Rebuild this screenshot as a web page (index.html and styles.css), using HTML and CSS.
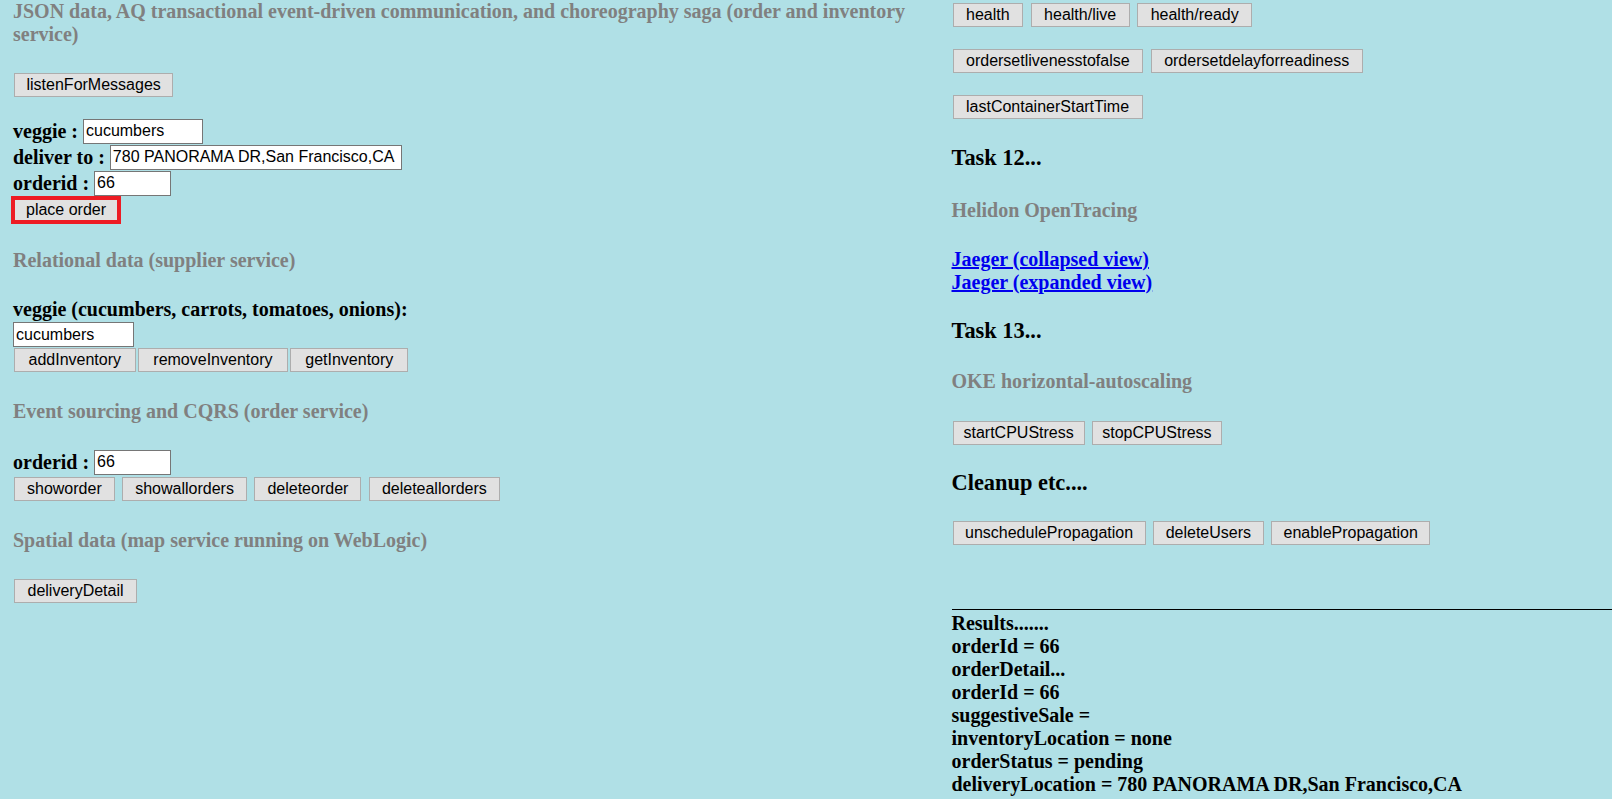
FILE: index.html
```html
<!DOCTYPE html>
<html>
<head>
<meta charset="utf-8">
<title>Order and inventory</title>
<link rel="stylesheet" href="styles.css">
</head>
<body>
<div class="page">
  <div class="col left">
    <h4 class="sec">JSON data, AQ transactional event-driven communication, and choreography saga (order and inventory service)</h4>
    <div class="btns m27"><button class="btn">listenForMessages</button></div>
    <div class="form m21">
      <div class="row"><span class="lbl">veggie :</span><input class="inp w120" value="cucumbers"></div>
      <div class="row"><span class="lbl">deliver to :</span><input class="inp w292" value="780 PANORAMA DR,San Francisco,CA"></div>
      <div class="row"><span class="lbl">orderid :</span><input class="inp w77" value="66"></div>
    </div>
    <div class="btns"><button class="btn hot">place order</button></div>

    <h4 class="sec m25">Relational data (supplier service)</h4>
    <div class="lbl block m26">veggie (cucumbers, carrots, tomatoes, onions):</div>
    <input class="inp w121 solo" value="cucumbers">
    <div class="btns tight m1"><button class="btn inv1">addInventory</button><button class="btn inv2">removeInventory</button><button class="btn inv3">getInventory</button></div>

    <h4 class="sec m28">Event sourcing and CQRS (order service)</h4>
    <div class="row m26"><span class="lbl">orderid :</span><input class="inp w77" value="66"></div>
    <div class="btns m2"><button class="btn mid">showorder</button><button class="btn mid">showallorders</button><button class="btn mid">deleteorder</button><button class="btn mid">deleteallorders</button></div>

    <h4 class="sec m28">Spatial data (map service running on WebLogic)</h4>
    <div class="btns m27"><button class="btn wide">deliveryDetail</button></div>
  </div>

  <div class="col right">
    <div class="btns m3"><button class="btn wide">health</button><button class="btn wide">health/live</button><button class="btn wide">health/ready</button></div>
    <div class="btns m22"><button class="btn wide">ordersetlivenesstofalse</button><button class="btn wide">ordersetdelayforreadiness</button></div>
    <div class="btns m22"><button class="btn wide">lastContainerStartTime</button></div>

    <h3 class="task m26">Task 12...</h3>
    <h4 class="sec m28">Helidon OpenTracing</h4>
    <div class="links m26">
      <a class="lnk" href="#">Jaeger (collapsed view)</a><br>
      <a class="lnk" href="#">Jaeger (expanded view)</a>
    </div>

    <h3 class="task m24">Task 13...</h3>
    <h4 class="sec m26">OKE horizontal-autoscaling</h4>
    <div class="btns m28"><button class="btn cpu1">startCPUStress</button><button class="btn cpu2">stopCPUStress</button></div>

    <h3 class="task m25">Cleanup etc....</h3>
    <div class="btns m25"><button class="btn">unschedulePropagation</button><button class="btn">deleteUsers</button><button class="btn">enablePropagation</button></div>

    <hr class="rule">
    <div class="results">
      <div>Results.......</div>
      <div>orderId = 66</div>
      <div>orderDetail...</div>
      <div>orderId = 66</div>
      <div>suggestiveSale =</div>
      <div>inventoryLocation = none</div>
      <div>orderStatus = pending</div>
      <div>deliveryLocation = 780 PANORAMA DR,San Francisco,CA</div>
    </div>
  </div>
</div>
</body>
</html>
```

FILE: styles.css
```css
html, body {
  margin: 0;
  padding: 0;
  background: #b0e0e6;
  overflow: hidden;
}
body {
  font-family: "Liberation Serif", "Times New Roman", serif;
  font-size: 20px;
  line-height: 23px;
  color: #000;
}
.page {
  display: grid;
  grid-template-columns: 925px 1fr;
  column-gap: 13.5px;
  padding-left: 13px;
  align-items: start;
}
.col {
  display: flex;
  flex-direction: column;
  align-items: flex-start;
  min-width: 0;
}
.right { align-items: stretch; }
.right > * { align-self: flex-start; }
.right > .rule { align-self: stretch; }

.sec {
  margin: 0;
  font-size: 20px;
  line-height: 23px;
  font-weight: bold;
  color: #808080;
}
.task {
  margin: 0;
  font-size: 22.4px;
  line-height: 26px;
  font-weight: bold;
  color: #000;
}
.lbl {
  font-weight: bold;
  font-size: 20px;
  line-height: 23px;
  white-space: nowrap;
}
.block { display: block; }

.btns {
  display: flex;
  gap: 7.5px;
}
.btns.tight { gap: 2.3px; }

.btn {
  box-sizing: border-box;
  height: 24px;
  margin: 0 0 0 1px;
  padding: 0 11.5px;
  border: 1px solid #adadad;
  background: #e1e1e1;
  color: #000;
  font-family: "Liberation Sans", Arial, sans-serif;
  font-size: 16px;
  line-height: 18px;
  border-radius: 0;
}
.btn.wide { padding: 0 12.5px; }
.btn.mid { padding: 0 12px; }
.btn.inv1 { padding: 0 13.5px; }
.btn.inv2 { padding: 0 14.5px; }
.btn.inv3 { padding: 0 14px; }
.btn.cpu1 { padding: 0 10px; }
.btn.cpu2 { padding: 0 9px; }
.btns .btn + .btn { margin-left: 0; }
.btn.hot {
  height: 28px;
  margin-left: -2px;
  padding: 0 11px;
  border: 4px solid #ed1c24;
}

.form { display: flex; flex-direction: column; }
.row {
  display: flex;
  align-items: center;
  gap: 5px;
  height: 26px;
}
.inp {
  box-sizing: border-box;
  height: 25px;
  margin: 0;
  padding: 1px 2px;
  border: 1px solid #767676;
  background: #fff;
  color: #000;
  font-family: "Liberation Sans", Arial, sans-serif;
  font-size: 16px;
  border-radius: 0;
}
.inp.solo { margin-top: 1px; }
.w120 { width: 120px; }
.w121 { width: 121px; }
.w292 { width: 292px; }
.w77 { width: 77px; }

.lnk {
  color: #0000ee;
  font-weight: bold;
  text-decoration: underline;
}

.rule {
  margin: 64px 0 0 0;
  height: 0;
  border: 0;
  border-top: 1px solid #000;
  width: 100%;
}
.results {
  margin-top: 1.5px;
  font-weight: bold;
  font-size: 20px;
  line-height: 23px;
  white-space: nowrap;
}

.m1 { margin-top: 1px; }
.m2 { margin-top: 2px; }
.m3 { margin-top: 3px; }
.m21 { margin-top: 21px; }
.m22 { margin-top: 22px; }
.m24 { margin-top: 24px; }
.m25 { margin-top: 25px; }
.m26 { margin-top: 26px; }
.m27 { margin-top: 27px; }
.m28 { margin-top: 28px; }
```
